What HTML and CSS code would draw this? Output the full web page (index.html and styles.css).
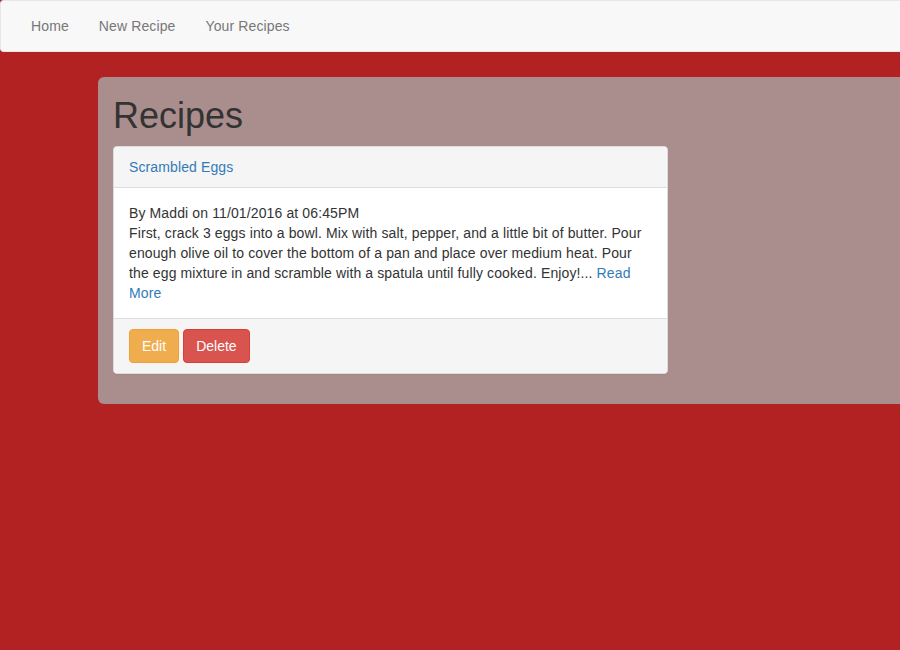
FILE: index.html
```html
<!DOCTYPE html>
<html>
<head>
<meta charset="utf-8">
<link rel="stylesheet" href="styles.css">
</head>
<body>
<nav class="navbar">
  <ul class="nav">
    <li><a href="#">Home</a></li>
    <li><a href="#">New Recipe</a></li>
    <li><a href="#">Your Recipes</a></li>
  </ul>
</nav>
<div class="jumbotron">
  <h1>Recipes</h1>
  <div class="panel">
    <div class="panel-heading"><a href="#">Scrambled Eggs</a></div>
    <div class="panel-body">
      <div>By Maddi on 11/01/2016 at 06:45PM</div>
      <div>First, crack 3 eggs into a bowl. Mix with salt, pepper, and a little bit of butter. Pour enough olive oil to cover the bottom of a pan and place over medium heat. Pour the egg mixture in and scramble with a spatula until fully cooked. Enjoy!... <a href="#">Read More</a></div>
    </div>
    <div class="panel-footer">
      <button class="btn btn-warning">Edit</button>
      <button class="btn btn-danger">Delete</button>
    </div>
  </div>
</div>
</body>
</html>
```
FILE: styles.css
```css
html, body {
  margin: 0;
  padding: 0;
  overflow: hidden;
}
body {
  background: #b22222;
  font-family: "Liberation Sans", Arial, sans-serif;
  font-size: 14px;
  line-height: 20px;
  letter-spacing: 0.12px;
  color: #333;
  width: 900px;
  height: 650px;
}
a {
  color: #337ab7;
  text-decoration: none;
}
.navbar {
  background: #f8f8f8;
  border: 1px solid #e7e7e7;
  border-right: none;
  border-radius: 4px 0 0 4px;
  min-height: 50px;
}
.nav {
  list-style: none;
  margin: 0;
  padding: 0 15px;
  display: flex;
}
.nav a {
  display: block;
  padding: 15px;
  color: #777;
}
.jumbotron {
  margin: 25px 0 0 98px;
  background: #aa8e8e;
  border-radius: 6px 0 0 6px;
  padding: 19px 15px 10px 15px;
}
h1 {
  font-size: 36px;
  font-weight: 500;
  line-height: 39.6px;
  letter-spacing: 0;
  margin: 0 0 10px 0;
  color: #333;
}
.panel {
  width: 553px;
  background: #fff;
  border: 1px solid #ddd;
  border-radius: 4px;
  margin-bottom: 20px;
  box-shadow: 0 1px 1px rgba(0,0,0,0.05);
}
.panel-heading {
  padding: 10px 15px;
  background: #f5f5f5;
  border-bottom: 1px solid #ddd;
  border-radius: 3px 3px 0 0;
}
.panel-body {
  padding: 15px;
}
.panel-footer {
  padding: 10px 15px;
  background: #f5f5f5;
  border-top: 1px solid #ddd;
  border-radius: 0 0 3px 3px;
  display: flex;
  gap: 4px;
}
.btn {
  font-family: inherit;
  font-size: 14px;
  line-height: 20px;
  letter-spacing: 0;
  padding: 6px 12px;
  border: 1px solid transparent;
  border-radius: 4px;
  color: #fff;
  cursor: pointer;
}
.btn-warning {
  background: #f0ad4e;
  border-color: #eea236;
}
.btn-danger {
  background: #d9534f;
  border-color: #d43f3a;
}
```
